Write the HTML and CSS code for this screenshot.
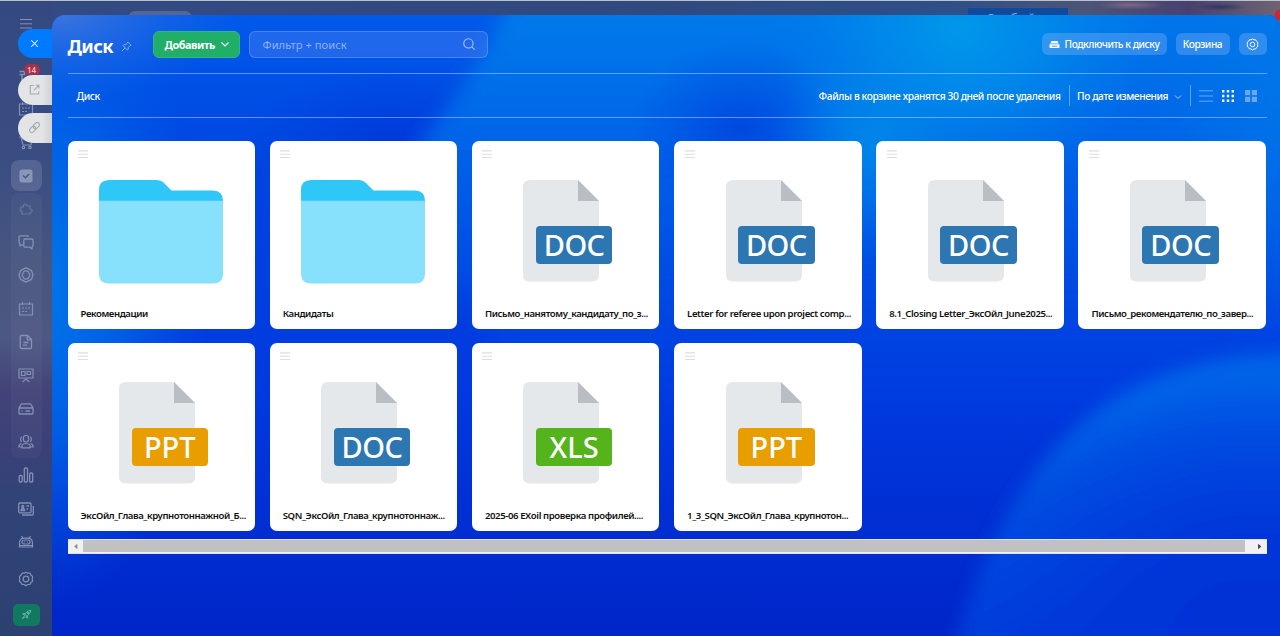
FILE: index.html
```html
<!DOCTYPE html>
<html lang="ru">
<head>
<meta charset="utf-8">
<title>Диск</title>
<link rel="stylesheet" href="styles.css">
</head>
<body>
<svg class="defs" width="0" height="0">
  <symbol id="lines" viewBox="0 0 10 9"><path d="M0 .9h10M0 4.2h10M0 7.5h10" stroke="#dcdee1" stroke-width="1.1"/></symbol>
  <symbol id="folder" viewBox="0 0 124 104">
    <path d="M0 20V10Q0 0 10 0H57Q62 0 65 3L72.500 10.500H114Q124 11 124 20.500V22H0Z" fill="#2fc6f8"/>
    <path d="M0 20.800H124V94Q124 103.500 114 103.500H10Q0 103.500 0 94Z" fill="#87e1fc"/>
  </symbol>
  <symbol id="page" viewBox="0 0 90 102">
    <path d="M7 0H55L76 21V95Q76 101.500 69 101.500H7Q0 101.500 0 95V7Q0 0 7 0Z" fill="#e4e8eb"/>
    <path d="M55 0L76 21H55Z" fill="#b9bec5"/>
  </symbol>
  <symbol id="gear" viewBox="0 0 16 16"><g fill="none" stroke="currentColor" stroke-width="1.200"><path d="M8 1.200l1.800 1 2.100 0 1 1.900 1.700 1.300-.4 2.600.4 2.200-1.700 1.400-1 1.800-2.100.1L8 14.800l-1.800-1.300-2.100-.1-1-1.800-1.700-1.400.4-2.200-.4-2.600 1.700-1.300 1-1.900 2.100 0z" stroke-linejoin="round"/><circle cx="8" cy="8" r="2.800"/></g></symbol>
  <symbol id="calendar" viewBox="0 0 16 16"><path d="M1.500 3h13v11h-13zM4.500 1v3M11.500 1v3M4 7h2M7 7h2M10 7h2M4 10.500h2M7 10.500h2" fill="none" stroke="currentColor" stroke-width="1.200"/></symbol>
</svg>

<div class="topline"></div>
<div class="backdrop-pill"></div>
<div class="backdrop-box">Особый</div>
<div class="backdrop-photo"></div>

<nav class="rail">
  <div class="rail-group"></div>
  <div class="slot slot-menu"><svg viewBox="0 0 16 16"><path d="M2 3.500h12M2 7.800h12M2 12h12" stroke="currentColor"/></svg></div>
  <div class="slot"><svg viewBox="0 0 16 16"><path d="M1.500 3.500h5v3h-5M4 7v6" fill="none" stroke="currentColor" stroke-width="1.500"/></svg><span class="count">14</span></div>
  <div class="slot"><svg><use href="#calendar"/></svg></div>
  <div class="slot"><svg viewBox="0 0 16 16" fill="none" stroke="currentColor" stroke-width="1.200"><path d="M1 3h2l2 8h8l1.500-6H4"/><circle cx="5.500" cy="13.500" r="1.200"/><circle cx="12" cy="13.500" r="1.200"/></svg></div>
  <div class="slot active"><svg viewBox="0 0 16 16"><rect x="1.500" y="1.500" width="13" height="13" rx="2.500" fill="#8996b8"/><path d="M5 7.500l2.500 2.300 3.500-3.800" fill="none" stroke="#48577f" stroke-width="1.400"/></svg></div>
  <div class="slot dim"><svg viewBox="0 0 16 16" fill="none" stroke="currentColor" stroke-width="1.200"><path d="M3 6h2.500C4.500 2.500 9 2 9 5h3v3c3 0 2.500 3.500 0 3.500V13H4v-2.500C1.500 10 2 8 3 8z"/></svg></div>
  <div class="slot"><svg viewBox="0 0 16 16" fill="none" stroke="currentColor" stroke-width="1.300" stroke-linejoin="round"><path d="M5 11H3.800L2 12V9.500Q1 9 1 8V3Q1 1.800 2.200 1.800H9.500Q10.700 1.800 10.700 3"/><path d="M7 5h6.500Q15 5 15 6.500v5Q15 12.500 14 13v2l-2-1.800H7Q5.800 13.200 5.800 12V6.300Q5.800 5 7 5z"/></svg></div>
  <div class="slot"><svg viewBox="0 0 16 16" fill="none" stroke="currentColor" stroke-width="1.300" stroke-linejoin="round"><path d="M8 .9l5.500 2.800 1.500 4.300-1.500 4.300L8 15.100l-5.500-2.800L1 8l1.500-4.300z"/><path d="M6 4.200h4l2 3.800-2 3.800H6L4 8z"/></svg></div>
  <div class="slot"><svg><use href="#calendar"/></svg></div>
  <div class="slot"><svg viewBox="0 0 16 16" fill="none" stroke="currentColor" stroke-width="1.300" stroke-linejoin="round"><path d="M3.500 1.500H9.500L13.500 5.500V13.500Q13.500 14.500 12.500 14.500H3.500Q2.300 14.500 2.300 13.300V2.700Q2.300 1.500 3.500 1.500zM9.300 1.800v4h4M5.500 8.500h5M5 11.200h4"/></svg></div>
  <div class="slot"><svg viewBox="0 0 16 16" fill="none" stroke="currentColor" stroke-width="1.200"><path d="M1 2h14v9H1zM3.500 4.500H7v4H3.500zM9 4.500h3.500v3H9zM8 11v2M4.500 15L8 12l3.500 3"/></svg></div>
  <div class="slot"><svg viewBox="0 0 16 16" fill="none" stroke="currentColor" stroke-width="1.300" stroke-linejoin="round"><path d="M1 7L3 3.500Q3.300 2.800 4 2.800h8Q12.700 2.800 13 3.500L15 7v5.200Q15 13 14.200 13H1.800Q1 13 1 12.200zM1 7h14M3.500 10h1M7.500 10h4.500"/></svg></div>
  <div class="slot"><svg viewBox="0 0 16 16" fill="none" stroke="currentColor" stroke-width="1.200"><rect x="5.400" y="1.500" width="5.200" height="6.500" rx="2.400"/><path d="M4 13.800v-2.500Q5 9.500 8 9.500t4 1.800v2.500zM4 2.800Q1.500 4 3.500 8M12 2.800Q14.500 4 12.500 8M3.500 9.500Q.8 10 .8 13H4M12.500 9.500Q15.200 10 15.200 13H12"/></svg></div>
  <div class="slot"><svg viewBox="0 0 16 16" fill="none" stroke="currentColor" stroke-width="1.300"><rect x="1.200" y="8.500" width="3" height="6.500" rx="1"/><rect x="6.300" y="1" width="3.200" height="14" rx="1"/><rect x="11.700" y="6" width="3" height="9" rx="1"/></svg></div>
  <div class="slot"><svg viewBox="0 0 16 16" fill="none" stroke="currentColor" stroke-width="1.300"><rect x=".7" y="2" width="12.300" height="9.800" rx="1"/><path d="M4 14h10Q15.300 14 15.300 13V5M3 9.500Q3.200 7.500 4.800 7.500T6.600 9.500zM8.500 5H11M8.500 8H10"/><circle cx="4.800" cy="5.500" r="1"/></svg></div>
  <div class="slot"><svg viewBox="0 0 16 16" fill="none" stroke="currentColor" stroke-width="1.200"><path d="M3.500 2l1.600 2.300M12.500 2l-1.600 2.300M1.500 9.500Q1.500 4.500 5.500 4.200h5Q14.500 4.500 14.500 9.500V13H1.500z"/><rect x="4" y="6" width="8" height="4" rx="2"/><path d="M6 8h.8M9.300 8h.8M1.500 11.500h13"/></svg></div>
  <div class="slot slot-gear"><svg><use href="#gear"/></svg></div>
  <div class="rocket"><svg viewBox="0 0 16 16" fill="none" stroke="#76bfae" stroke-width="1.300" stroke-linejoin="round"><path d="M5.500 9Q8 2.500 14 2q-.5 6-7 8.500zM6 6.500L2.500 7 5.500 9M9.500 10L9 13.500 7 10.500M4.500 10.500L2 14l3.500-2"/><circle cx="10.200" cy="5.800" r="1"/></svg></div>
</nav>

<div class="tab tab-close"><svg viewBox="0 0 16 16"><path d="M4 4l8 8M12 4l-8 8" stroke="#fff" stroke-width="1.300"/></svg></div>
<div class="tab tab-open"><svg viewBox="0 0 16 16" fill="none" stroke="#a5aab1" stroke-width="1.300"><path d="M7 3H2.800V13.500H13.200V10M9.500 2.700h4v4M13.300 2.900L7.500 8.700"/></svg></div>
<div class="tab tab-link"><svg viewBox="0 0 16 16" fill="none" stroke="#a5aab1" stroke-width="1.400"><g transform="rotate(-45 8 8)"><rect x="0.500" y="5.300" width="8.500" height="5.400" rx="2.700"/><rect x="7" y="5.300" width="8.500" height="5.400" rx="2.700"/></g></svg></div>

<main class="panel">
  <svg class="wallpaper" viewBox="52 15 1228 621" preserveAspectRatio="none">
    <defs>
      <linearGradient id="base" x1="0" y1="0" x2="0" y2="1"><stop offset="0" stop-color="#005aea"/><stop offset=".25" stop-color="#0044e0"/><stop offset=".6" stop-color="#003ae0"/><stop offset="1" stop-color="#0025c8"/></linearGradient>
      <radialGradient id="glow"><stop offset="0" stop-color="#0078e8"/><stop offset=".5" stop-color="#0072e8" stop-opacity=".6"/><stop offset="1" stop-color="#0060e8" stop-opacity="0"/></radialGradient>
      <radialGradient id="cyan"><stop offset="0" stop-color="#0098ea"/><stop offset=".45" stop-color="#0090ea" stop-opacity=".65"/><stop offset="1" stop-color="#0080ea" stop-opacity="0"/></radialGradient>
      <radialGradient id="deep"><stop offset="0" stop-color="#0038da"/><stop offset="1" stop-color="#0040e0" stop-opacity="0"/></radialGradient>
      <radialGradient id="corner"><stop offset="0" stop-color="#3c74de"/><stop offset="1" stop-color="#1c68e4" stop-opacity="0"/></radialGradient>
      <linearGradient id="sweep" gradientUnits="userSpaceOnUse" x1="0" y1="15" x2="0" y2="430"><stop offset="0" stop-color="#007aea"/><stop offset=".4" stop-color="#0060e8" stop-opacity=".9"/><stop offset="1" stop-color="#0044e4" stop-opacity="0"/></linearGradient>
      <radialGradient id="orb" gradientUnits="userSpaceOnUse" cx="1260" cy="690" r="350"><stop offset="0" stop-color="#0024c8"/><stop offset=".45" stop-color="#0038da"/><stop offset=".8" stop-color="#0056e4"/><stop offset="1" stop-color="#006eea"/></radialGradient>
      <linearGradient id="orbshade" gradientUnits="userSpaceOnUse" x1="0" y1="400" x2="0" y2="640"><stop offset="0" stop-color="#0034d8" stop-opacity="0"/><stop offset="1" stop-color="#0034d8" stop-opacity=".8"/></linearGradient>
      <filter id="soft" x="-20%" y="-20%" width="140%" height="140%"><feGaussianBlur stdDeviation="9"/></filter>
    </defs>
    <rect x="52" y="15" width="1228" height="621" fill="url(#base)"/>
    <ellipse cx="390" cy="145" rx="150" ry="80" fill="url(#deep)"/>
    <ellipse cx="40" cy="290" rx="170" ry="320" fill="url(#glow)"/>
    <path d="M510 0Q480 70 415 150Q430 330 620 440L1290 440V0Z" fill="url(#sweep)" filter="url(#soft)"/>
    <ellipse cx="740" cy="130" rx="110" ry="90" fill="url(#deep)" opacity=".65"/>
    <ellipse cx="960" cy="30" rx="190" ry="170" fill="url(#cyan)"/>
    <ellipse cx="870" cy="150" rx="100" ry="110" fill="url(#cyan)" opacity=".6"/>
    <ellipse cx="1290" cy="90" rx="170" ry="260" fill="url(#glow)" opacity=".8"/>
    <g filter="url(#soft)"><path d="M950 660C985 540 1030 450 1120 395Q1200 350 1310 354V660Z" fill="url(#orb)"/><path d="M950 660C985 540 1030 450 1120 395Q1200 350 1310 354V660Z" fill="url(#orbshade)"/></g>
    <ellipse cx="60" cy="15" rx="180" ry="85" fill="url(#corner)"/>
  </svg>

  <header class="head">
    <h1>Диск</h1>
    <svg class="pin" viewBox="0 0 12 12" fill="none" stroke="#91b6f2" stroke-width="1"><path d="M7.300 1l3.700 3.700-1.200.3-1.900 2 .1 1.900-1 1L2.200 5l1-1 1.900.1 2-1.900zM4.500 7.500L1 11"/></svg>
    <button class="add">Добавить<svg viewBox="0 0 10 10"><path d="M1.500 3.500L5 7l3.500-3.500" fill="none" stroke="#fff" stroke-width="1.100"/></svg></button>
    <div class="search"><span>Фильтр + поиск</span><svg viewBox="0 0 16 16" fill="none" stroke="#a4c0f5" stroke-width="1.300"><circle cx="7.300" cy="7.300" r="5.300"/><path d="M11.200 11.200l3.300 3.300"/></svg></div>
    <div class="actions">
      <button class="ghost connect"><svg viewBox="0 0 12 10"><path d="M2.800 1h6.400l1.500 3H1.300zM.5 4.800h11V9H.5z" fill="#fff"/><path d="M3 6.900h6" stroke="#328ded"/></svg>Подключить к диску</button>
      <button class="ghost bin">Корзина</button>
      <button class="ghost cog"><svg><use href="#gear"/></svg></button>
    </div>
  </header>

  <div class="bar">
    <span class="crumb">Диск</span>
    <span class="note">Файлы в корзине хранятся 30 дней после удаления</span>
    <i class="sep"></i>
    <span class="sort">По дате изменения</span>
    <svg class="chev" viewBox="0 0 8 8"><path d="M1 2.500l3 3 3-3" fill="none" stroke="#a8cbf8"/></svg>
    <i class="sep sep-two"></i>
    <svg class="view v-list" viewBox="0 0 14 12"><path d="M0 .8h14M0 6h14M0 11.200h14" stroke="#6aa6f2"/></svg>
    <svg class="view v-dots" viewBox="0 0 12 12" fill="#fff"><path d="M0 0h2.400v2.400H0zM4.800 0h2.400v2.400H4.800zM9.600 0H12v2.400H9.600zM0 4.800h2.400v2.400H0zM4.800 4.800h2.400v2.400H4.800zM9.600 4.800H12v2.400H9.600zM0 9.600h2.400V12H0zM4.800 9.600h2.400V12H4.800zM9.600 9.600H12V12H9.600z"/></svg>
    <svg class="view v-tiles" viewBox="0 0 12 12" fill="#6aa6f2"><path d="M0 0h5.200v5.200H0zM6.800 0H12v5.200H6.800zM0 6.800h5.200V12H0zM6.800 6.800H12V12H6.800z"/></svg>
  </div>

  <section class="grid">
    <article class="card"><svg class="grip"><use href="#lines"/></svg><svg class="folder"><use href="#folder"/></svg><p class="n1">Рекомендации</p></article>
    <article class="card"><svg class="grip"><use href="#lines"/></svg><svg class="folder"><use href="#folder"/></svg><p class="n2">Кандидаты</p></article>
    <article class="card"><svg class="grip"><use href="#lines"/></svg><div class="file"><svg><use href="#page"/></svg><b class="doc">DOC</b></div><p class="n3">Письмо_нанятому_кандидату_по_з...</p></article>
    <article class="card"><svg class="grip"><use href="#lines"/></svg><div class="file"><svg><use href="#page"/></svg><b class="doc">DOC</b></div><p class="n4">Letter for referee upon project comp...</p></article>
    <article class="card"><svg class="grip"><use href="#lines"/></svg><div class="file"><svg><use href="#page"/></svg><b class="doc">DOC</b></div><p class="n5">8.1_Closing Letter_ЭксОйл_June2025...</p></article>
    <article class="card"><svg class="grip"><use href="#lines"/></svg><div class="file"><svg><use href="#page"/></svg><b class="doc">DOC</b></div><p class="n6">Письмо_рекомендателю_по_завер...</p></article>
    <article class="card"><svg class="grip"><use href="#lines"/></svg><div class="file"><svg><use href="#page"/></svg><b class="ppt">PPT</b></div><p class="n7">ЭксОйл_Глава_крупнотоннажной_Б...</p></article>
    <article class="card"><svg class="grip"><use href="#lines"/></svg><div class="file"><svg><use href="#page"/></svg><b class="doc">DOC</b></div><p class="n8">SQN_ЭксОйл_Глава_крупнотоннаж...</p></article>
    <article class="card"><svg class="grip"><use href="#lines"/></svg><div class="file"><svg><use href="#page"/></svg><b class="xls">XLS</b></div><p class="n9">2025-06 EXoil проверка профилей....</p></article>
    <article class="card"><svg class="grip"><use href="#lines"/></svg><div class="file"><svg><use href="#page"/></svg><b class="ppt">PPT</b></div><p class="n10">1_3_SQN_ЭксОйл_Глава_крупнотон...</p></article>
  </section>

  <div class="scroll">
    <svg viewBox="0 0 14 14"><path d="M9 4v6L5.500 7z" fill="#8b8b8b"/></svg>
    <div class="thumb"></div>
    <svg class="right" viewBox="0 0 14 14"><path d="M6 4v6l3.500-3z" fill="#444"/></svg>
  </div>
</main>
</body>
</html>
```
FILE: styles.css
```css
* { box-sizing: border-box; }
body {
  margin: 0; width: 1280px; height: 636px; overflow: hidden; position: relative;
  font-family: "Noto Sans", "Open Sans", sans-serif; font-size: 10px;
  background: linear-gradient(90deg, #344a83 0, #31497f 600px, #2e4f88 950px, #4c5579 1080px, #48416f 1190px, #6d6272 1275px);
  display: flex;
}
svg { display: block; flex: none; }
.defs, .topline, .backdrop-pill, .backdrop-box, .backdrop-photo { position: absolute; }
.topline { left: 0; top: 0; width: 1280px; height: 1px; background: #b9c3cd; z-index: 2; }
.backdrop-pill { left: 128px; top: 11px; width: 64px; height: 14px; border-radius: 7px; background: #566694; }
.backdrop-box { left: 968px; top: 8px; width: 100px; height: 20px; background: #104a9c; color: #8ea9d2; font-size: 13px; line-height: 20px; padding-left: 18px; }
.backdrop-photo { left: 1100px; top: 1px; width: 180px; height: 24px; background: radial-gradient(ellipse at 30px 4px, #806781 0, rgba(110,98,128,0) 34px), radial-gradient(circle at 180px 14px, #c8283a 0 5px, transparent 6px), radial-gradient(ellipse at 120px 6px, #303560 0, transparent 26px); }

.rail {
  position: relative; width: 52px; height: 636px; padding-top: 6px; flex: none;
  display: flex; flex-direction: column; align-items: center;
  color: #8490b4;
  background: linear-gradient(180deg, #34497f 0, #394d83 150px, #48567f 270px, #4d5783 340px, #424378 390px, #3a4078 450px, #304478 500px, #2d4072 636px);
}
.rail-group { position: absolute; left: 11px; top: 193px; width: 31px; height: 265px; border-radius: 8px; background: rgba(255,255,255,.035); }
.slot { position: relative; height: 33.3px; width: 31px; display: flex; align-items: center; justify-content: center; flex: none; }
.slot svg { width: 16px; height: 16px; }
.slot-menu { height: 36px; margin-bottom: 17px; }
.active::before { content: ""; position: absolute; inset: 1.500px 0; border-radius: 8px; background: rgba(255,255,255,.13); }
.active svg { position: relative; }
.dim { opacity: .55; }
.slot-gear { margin-top: 4px; }
.count { position: absolute; left: 13px; top: 5px; width: 16px; height: 11px; border-radius: 6px; background: #aa3049; color: #d9c3cf; font-size: 8px; font-weight: 600; line-height: 11px; text-align: center; }
.rocket { margin-top: 8px; width: 27px; height: 22px; border-radius: 5px; background: #11795f; display: flex; align-items: center; justify-content: center; }
.rocket svg { width: 11px; height: 11px; }

.tab { position: absolute; left: 18px; width: 34px; height: 29.500px; border-radius: 15px 0 0 15px; display: flex; align-items: center; }
.tab svg { width: 13px; height: 13px; margin-left: 9.500px; }
.tab-close { top: 28.500px; background: #007bff; }
.tab-open { top: 75px; background: linear-gradient(90deg, #e2e4e6 70%, #cfd1d5); }
.tab-link { top: 113px; background: linear-gradient(90deg, #e2e4e6 70%, #cfd1d5); }

.panel {
  position: relative; width: 1228px; height: 621px; margin-top: 15px; padding: 0 13.500px 0 15.500px;
  border-radius: 13px 13px 0 0; overflow: hidden; color: #fff; background: #003de0;
  display: flex; flex-direction: column;
}
.panel > * { position: relative; }
.panel > .wallpaper { position: absolute; left: 0; top: 0; width: 1228px; height: 621px; }

.head { height: 59px; display: flex; align-items: center; border-bottom: 1px solid rgba(190,220,255,.48); flex: none; }
h1 { margin: 3px 0 0; width: 53px; font-size: 18.500px; line-height: 24px; font-weight: 700; letter-spacing: -.6px; }
.pin { width: 11px; height: 11px; margin-top: 4px; }
button { font: inherit; color: #fff; border: 0; padding: 0; display: flex; align-items: center; }
.add { margin-left: 21px; width: 87px; height: 27px; border-radius: 6px; background: #20ae68; padding-left: 11px; font-size: 10.800px; font-weight: 700; letter-spacing: -.42px; border: 1px solid #2fb981; }
.add svg { width: 10px; height: 10px; margin-left: 5px; }
.search { margin-left: 9px; width: 239px; height: 27px; border: 1px solid rgba(140,180,255,.38); border-radius: 6px; background: rgba(90,135,240,.36); display: flex; align-items: center; justify-content: space-between; padding: 0 11px 0 13px; color: #8fb3f6; font-size: 11.200px; }
.search svg { width: 14px; height: 14px; }
.actions { margin-left: auto; display: flex; gap: 9px; }
.ghost { height: 22px; border-radius: 6px; background: rgba(120,175,245,.4); justify-content: center; font-size: 10.200px; letter-spacing: -.45px; font-weight: 500; }
.connect { width: 125px; }
.connect svg { width: 11px; height: 9px; margin-right: 5px; }
.bin { width: 54px; }
.cog { width: 28px; }
.cog svg { width: 13px; height: 13px; }

.bar { height: 44px; display: flex; align-items: center; border-bottom: 1px solid rgba(190,220,255,.48); flex: none; font-size: 10.200px; font-weight: 500; letter-spacing: -.38px; white-space: nowrap; }
.crumb { margin-left: 9px; margin-top: 1px; }
.note { margin-left: auto; }
.sep { width: 1px; height: 21px; background: rgba(190,220,255,.5); margin: 0 7.500px 0 8px; }
.sort { width: 93px; }
.chev { width: 8px; height: 8px; margin: 2px 0 0 4px; }
.sep-two { margin: 0 8px; }
.v-list { width: 14px; height: 12px; }
.v-dots { width: 12px; height: 12px; margin-left: 9px; }
.v-tiles { width: 12px; height: 12px; margin: 0 9.500px 0 11px; }

.grid { margin-top: 23px; display: grid; grid-template-columns: repeat(6, 187.500px); gap: 14.700px; flex: none; }
.card { height: 187.500px; border-radius: 7px; background: #fff; color: #111; display: flex; flex-direction: column; }
.grip { width: 10px; height: 9px; margin: 9px 0 0 10.500px; }
.folder { width: 124px; height: 104px; margin: 20.500px 0 0 31.500px; }
.file { width: 90px; height: 102px; margin: 21px 0 1.500px 51.500px; position: relative; }
.file svg { width: 90px; height: 102px; }
.file b { position: absolute; left: 12.500px; top: 46px; width: 76.500px; height: 38px; border-radius: 4px; color: #fff; font-size: 29px; line-height: 38px; font-weight: 500; text-align: center; }
.doc { background: #2c77b1; letter-spacing: -.5px; }
.ppt { background: #e99e00; }
.xls { background: #55b41c; }
.card p { margin: 23px 0 0 13px; font-size: 9.600px; line-height: 14px; font-weight: 600; letter-spacing: -.4px; white-space: nowrap; }

.scroll { margin-top: 8px; width: 1199px; height: 15px; background: #f1f1f1; border: solid #dfe3ea; border-width: 1px 0; display: flex; align-items: center; flex: none; }
.scroll svg { width: 15px; height: 13px; }
.scroll .right { width: 22px; padding-left: 6px; }
.thumb { flex: 1; height: 12px; background: #c1c1c1; }
```
